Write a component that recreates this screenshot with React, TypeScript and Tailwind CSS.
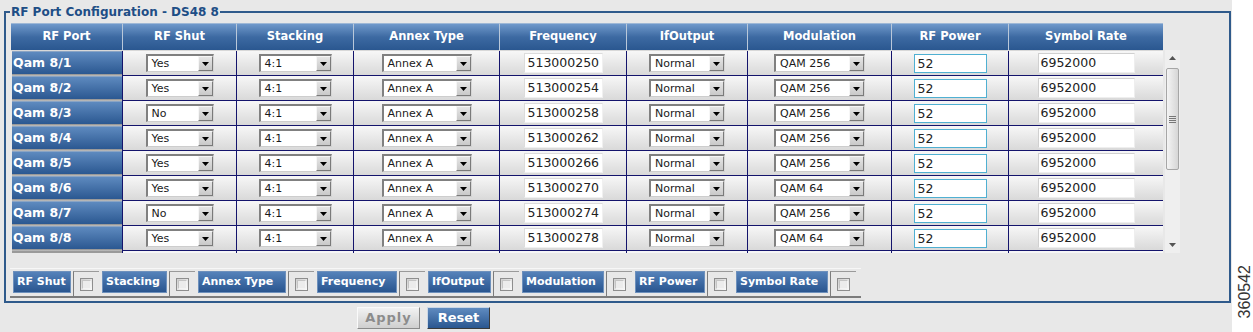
import React from "react";

const cols =
  "grid grid-cols-[111px_114px_117px_146px_127px_121px_144px_117px_155px]";

const headers = [
  "RF Port",
  "RF Shut",
  "Stacking",
  "Annex Type",
  "Frequency",
  "IfOutput",
  "Modulation",
  "RF Power",
  "Symbol Rate",
];

const rows = [
  { p: "Qam 8/1", shut: "Yes", f: "513000250", mod: "QAM 256" },
  { p: "Qam 8/2", shut: "Yes", f: "513000254", mod: "QAM 256" },
  { p: "Qam 8/3", shut: "No", f: "513000258", mod: "QAM 256" },
  { p: "Qam 8/4", shut: "Yes", f: "513000262", mod: "QAM 256" },
  { p: "Qam 8/5", shut: "Yes", f: "513000266", mod: "QAM 256" },
  { p: "Qam 8/6", shut: "Yes", f: "513000270", mod: "QAM 64" },
  { p: "Qam 8/7", shut: "No", f: "513000274", mod: "QAM 256" },
  { p: "Qam 8/8", shut: "Yes", f: "513000278", mod: "QAM 64" },
];

const bottomLabels = [
  { l: "RF Shut", w: "w-[58px]" },
  { l: "Stacking", w: "w-[65px]" },
  { l: "Annex Type", w: "w-[88px]" },
  { l: "Frequency", w: "w-[80px]" },
  { l: "IfOutput", w: "w-[63px]" },
  { l: "Modulation", w: "w-[82px]" },
  { l: "RF Power", w: "w-[70px]" },
  { l: "Symbol Rate", w: "w-[92px]" },
];

function Select({ value, w }: { value: string; w: string }) {
  return (
    <div
      className={`${w} h-[18px] flex bg-white border-t-2 border-l-2 border-r border-b border-t-[#808080] border-l-[#808080] border-r-[#d6d6d6] border-b-[#cdcdcd]`}
    >
      <span className="flex-1 pl-[4px] text-[11px] leading-[15px] text-[#1a1a1a] whitespace-nowrap overflow-hidden">
        {value}
      </span>
      <span className="w-[15px] h-full flex items-center justify-center bg-linear-to-b from-[#e6e6e6] to-[#c9c9c9] border border-t-[#f6f6f6] border-l-[#f6f6f6] border-r-[#7a7a7a] border-b-[#7a7a7a]">
        <svg width="7" height="4" viewBox="0 0 7 4">
          <path d="M0 0H7L3.5 4Z" fill="#000" />
        </svg>
      </span>
    </div>
  );
}

function Cell({ children }: { children: React.ReactNode }) {
  return (
    <div className="h-[25px] flex items-center justify-center border-l border-b border-l-[#14146c] border-b-[#14146c] bg-linear-to-b from-[#f7f7f7] to-[#d9d9d9]">
      {children}
    </div>
  );
}

function Checkbox() {
  return (
    <div className="w-[13px] h-[13px] border border-[#8e8e8e] bg-linear-to-br from-[#cfcfcf] to-[#fbfbfb] flex items-center justify-center">
      <div className="w-[9px] h-[9px] border border-t-[#c4c4c4] border-l-[#c4c4c4] border-r-[#f4f4f4] border-b-[#f4f4f4] bg-[#ececec]" />
    </div>
  );
}

export default function App() {
  return (
    <div className="flex w-[1253px] h-[332px] font-['DejaVu_Sans',sans-serif] overflow-hidden">
      <div className="w-[1232px] h-full bg-[#e8e8e8] pl-[4px] pt-[5px]">
        <fieldset className="w-[1227px] h-[298px] border-2 border-[#2f5a8b]">
          <legend className="ml-[4px] px-[1px] text-[12px] leading-[14px] font-bold text-[#1e4e86]">
            RF Port Configuration - DS48 8
          </legend>
          <div className="pl-[5px] pt-[4px]">
            {/* header */}
            <div className={`${cols} w-[1152px] h-[28px] border-b border-b-[#d8d8d8]`}>
              {headers.map((h, i) => (
                <div
                  key={h}
                  className={`h-[27px] flex items-center justify-center text-[11.5px] font-bold text-white bg-linear-to-b from-[#7099cb] via-[#3d6aa2] to-[#2a5790] border-t border-t-[#9fb8d6] ${
                    i > 0 ? "border-l border-l-[#b9c8da]" : ""
                  }`}
                >
                  {h}
                </div>
              ))}
            </div>
            {/* body + scrollbar */}
            <div className="flex">
              <div className="w-[1152px] h-[202px] overflow-hidden">
                {rows.map((r) => (
                  <div key={r.p} className={cols}>
                    <div className="h-[25px] pl-[1px] flex flex-col">
                      <div className="h-[23px] flex items-center pl-[1px] text-[12.5px] font-bold text-white bg-linear-to-b from-[#5e8abf] to-[#2b5891] border-t border-t-[#8aa4c4]">
                        {r.p}
                      </div>
                      <div className="h-[2px] bg-linear-to-b from-[#8c8c8c] to-[#c4c4c4]" />
                    </div>
                    <Cell>
                      <Select value={r.shut} w="w-[68px]" />
                    </Cell>
                    <Cell>
                      <Select value="4:1" w="w-[73px]" />
                    </Cell>
                    <Cell>
                      <Select value="Annex A" w="w-[90px]" />
                    </Cell>
                    <Cell>
                      <div className="w-[79px] h-[20px] bg-white border border-t-[#dcdcdc] border-l-[#dcdcdc] border-r-[#f0f0f0] border-b-[#f0f0f0] pl-[3px] text-[12.5px] leading-[18px] text-[#222]">
                        {r.f}
                      </div>
                    </Cell>
                    <Cell>
                      <Select value="Normal" w="w-[76px]" />
                    </Cell>
                    <Cell>
                      <Select value={r.mod} w="w-[91px]" />
                    </Cell>
                    <Cell>
                      <div className="w-[73px] h-[19px] bg-white border border-[#4fb0d2] pl-[3px] text-[12.5px] leading-[17px] text-[#222]">
                        52
                      </div>
                    </Cell>
                    <Cell>
                      <div className="w-[97px] h-[20px] bg-white border border-t-[#d0d0d0] border-l-[#d0d0d0] border-r-[#eeeeee] border-b-[#eeeeee] pl-[2px] text-[12.5px] leading-[18px] text-[#222]">
                        6952000
                      </div>
                    </Cell>
                  </div>
                ))}
                <div className={cols}>
                  <div className="h-[2px] ml-[1px] bg-[#9a9a9a]" />
                  {headers.slice(1).map((h) => (
                    <div
                      key={h}
                      className="h-[2px] border-l border-l-[#14146c] bg-[#f6f6f6]"
                    />
                  ))}
                </div>
              </div>
              {/* scrollbar */}
              <div className="ml-[2px] -mt-px w-[15px] h-[203px] bg-[#efefef] flex flex-col items-center">
                <svg className="mt-[6px]" width="7" height="4" viewBox="0 0 7 4">
                  <path d="M3.5 0L7 4H0Z" fill="#555" />
                </svg>
                <div className="mt-[8px] w-[13px] h-[102px] rounded-[2px] border border-[#a6a6a6] bg-linear-to-r from-[#f4f4f4] to-[#d6d6d6] flex flex-col items-center justify-center gap-[1px]">
                  <div className="w-[7px] h-px bg-[#777]" />
                  <div className="w-[7px] h-px bg-[#777]" />
                  <div className="w-[7px] h-px bg-[#777]" />
                  <div className="w-[7px] h-px bg-[#777]" />
                </div>
                <div className="flex-1" />
                <svg className="mb-[6px]" width="7" height="4" viewBox="0 0 7 4">
                  <path d="M0 0H7L3.5 4Z" fill="#555" />
                </svg>
              </div>
            </div>
            {/* bottom bar */}
            <div className="-ml-px mt-[15px] w-[851px] h-[30px] border-t border-t-[#f7f7f7] border-b-2 border-b-[#7c7c7c] flex items-start pt-[2px] pl-[3px]">
              {bottomLabels.map((b) => (
                <div key={b.l} className="flex items-start">
                  <div
                    className={`${b.w} h-[22px] pl-[3px] flex items-center text-[11px] font-bold text-white bg-linear-to-b from-[#5582ba] to-[#29558f] border border-[#6d90bc] whitespace-nowrap`}
                  >
                    {b.l}
                  </div>
                  <div className="ml-[2px] mr-[3px] w-[26px] h-[25px] flex items-center justify-center border-t border-l border-t-[#9a9a9a] border-l-[#7c7c7c]">
                    <Checkbox />
                  </div>
                </div>
              ))}
            </div>
          </div>
        </fieldset>
        {/* buttons */}
        <div className="flex gap-[7px] pl-[353px] mt-[4px]">
          <div className="w-[63px] h-[22px] flex items-center justify-center text-[13px] font-bold tracking-[1px] text-[#8c8c8c] bg-linear-to-b from-[#f2f2f2] to-[#cfcfcf] border border-t-[#fafafa] border-l-[#fafafa] border-r-[#8a8a8a] border-b-[#8a8a8a]">
            Apply
          </div>
          <div className="w-[63px] h-[22px] flex items-center justify-center text-[13px] font-bold text-white bg-linear-to-b from-[#5f8bc0] to-[#2a5790] border border-t-[#c9d6e6] border-l-[#c9d6e6] border-r-[#3a3a3a] border-b-[#3a3a3a]">
            Reset
          </div>
        </div>
      </div>
      <div className="flex-1 h-full bg-white flex flex-col justify-end items-center pl-[4px] pb-[14px]">
        <span className="[writing-mode:vertical-rl] rotate-180 text-[16px] leading-[16px] text-[#333] font-['Liberation_Sans',sans-serif]">
          360542
        </span>
      </div>
    </div>
  );
}
